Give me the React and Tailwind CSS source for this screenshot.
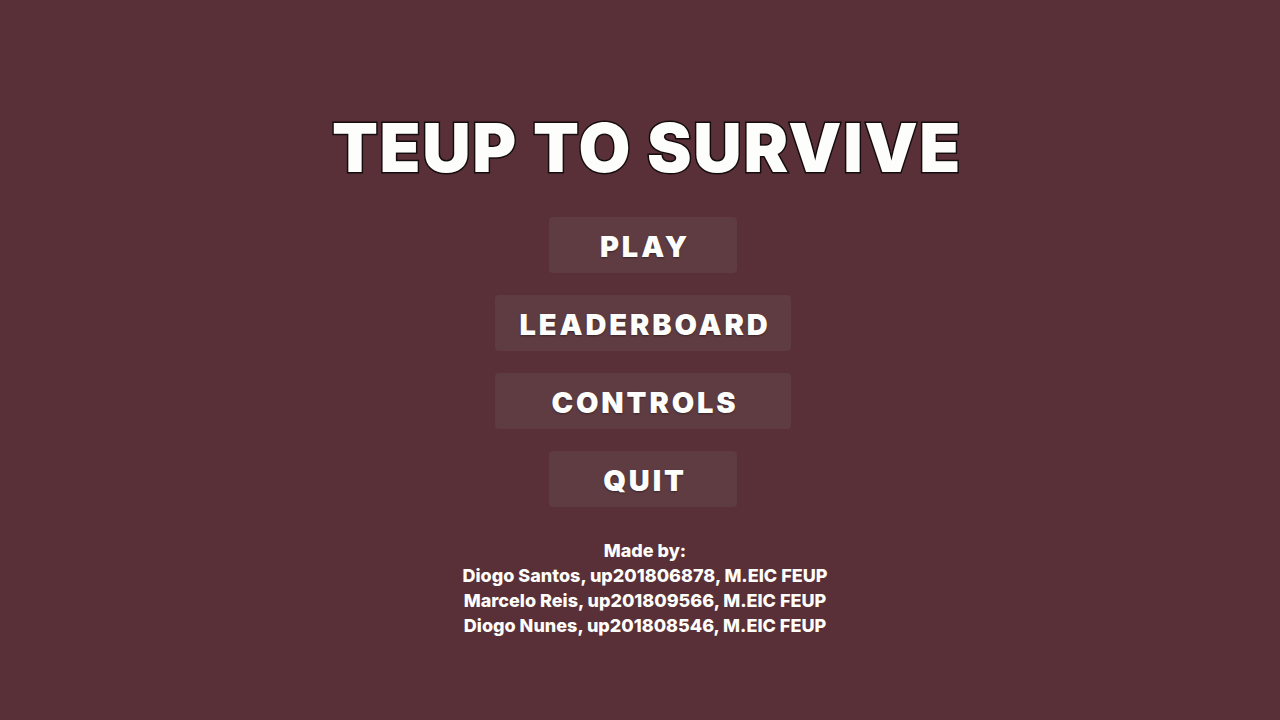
const menu = [
  { label: 'PLAY', width: 'w-47' },
  { label: 'LEADERBOARD', width: 'w-74' },
  { label: 'CONTROLS', width: 'w-74' },
  { label: 'QUIT', width: 'w-47' },
]

const authors = [
  'Diogo Santos, up201806878, M.EIC FEUP',
  'Marcelo Reis, up201809566, M.EIC FEUP',
  'Diogo Nunes, up201808546, M.EIC FEUP',
]

function MenuButton({ label, width }) {
  return (
    <button
      type="button"
      className={`${width} h-14 rounded-sm bg-[#5f3c42] pt-0.5 pl-1 text-[29px] leading-none font-black tracking-widest [text-shadow:0_1px_2px_#00000066] hover:bg-[#6a474d]`}
    >
      {label}
    </button>
  )
}

export default function App() {
  return (
    <main className="min-h-screen bg-[#593037] flex flex-col items-center pt-26 pb-20 pl-1.5 text-[#fdfdfb] font-['Inter','Open_Sans',sans-serif]">
      <h1 className="pl-2 text-[67px] leading-[88px] font-black tracking-wide whitespace-nowrap [-webkit-text-stroke:3px_#140c0e] [paint-order:stroke_fill]">
        TEUP TO SURVIVE
      </h1>
      <nav className="mt-[25px] flex flex-col items-center gap-[22px]">
        {menu.map((item) => (
          <MenuButton key={item.label} {...item} />
        ))}
      </nav>
      <footer className="mt-[31px] pl-1 text-center text-[18px] leading-[25px] font-extrabold">
        <p>Made by:</p>
        {authors.map((author) => (
          <p key={author}>{author}</p>
        ))}
      </footer>
    </main>
  )
}
